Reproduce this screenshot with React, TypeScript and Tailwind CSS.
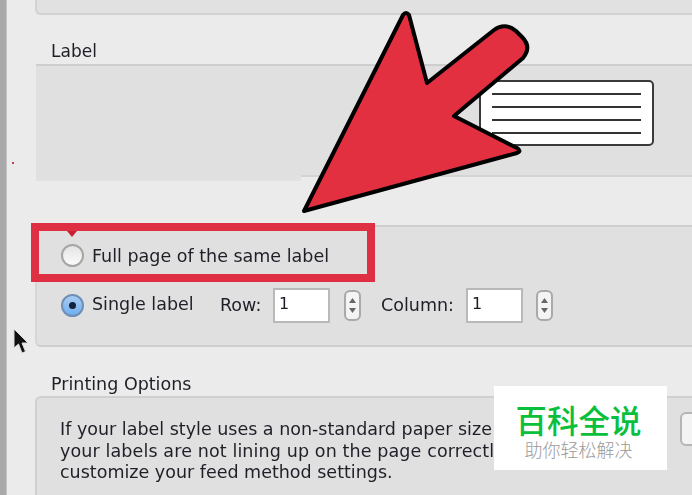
import React from "react";

const uiFont = "font-['DejaVu_Sans',sans-serif]";

function Stepper() {
  return (
    <div className="flex h-[31px] w-[17px] flex-col items-center justify-center gap-[5px] rounded-[6px] border-2 border-[#a9a9a9] bg-[#f4f4f4]">
      <svg width="7" height="5" viewBox="0 0 7 5"><path d="M3.5 0L7 5H0z" fill="#666" /></svg>
      <svg width="7" height="5" viewBox="0 0 7 5"><path d="M3.5 5L7 0H0z" fill="#666" /></svg>
    </div>
  );
}

function NumberField() {
  return (
    <div className="flex h-[35px] w-[57px] items-center border-2 border-[#b9b9b9] bg-white pb-1 pl-[4px] text-[16px] font-medium text-[#1c1c24] blur-[0.4px]">
      1
    </div>
  );
}

function Radio({ checked }: { checked?: boolean }) {
  if (checked) {
    return (
      <div className="flex size-[23px] items-center justify-center rounded-full border-2 border-[#6f8fb5] bg-gradient-to-b from-[#a9cdf3] to-[#6faef0]">
        <div className="size-[7px] rounded-full bg-[#14233a]" />
      </div>
    );
  }
  return <div className="size-[23px] rounded-full border-2 border-[#a5a5a5] bg-gradient-to-b from-[#e4e4e4] to-[#fbfbfb]" />;
}

export default function App() {
  return (
    <div className={`relative flex h-[495px] w-[692px] overflow-hidden bg-[#ebebeb] text-[#1f1f28] ${uiFont}`}>
      <div className="w-[7px] shrink-0 border-r border-[#c4c4c4] bg-[#a9a9a9]" />

      <div className="flex min-w-0 flex-1 flex-col pl-[28px]">
        <div className="-mr-3 h-[15px] shrink-0 rounded-bl-[6px] border-b-2 border-l-2 border-[#d2d2d2] bg-[#e1e1e1]" />

        <div className="mt-[26px] h-[21px] shrink-0 pl-[16px] text-[17px] leading-[21px] blur-[0.4px]">Label</div>

        <div className="relative mt-[2px] -mr-3 ml-px flex h-[113px] shrink-0 items-start border-t-2 border-b-2 border-t-[#cecece] border-b-[#d4d4d4] bg-[#e0e0e0] pt-[14px] pl-[443px]">
          <div className="flex h-[66px] w-[175px] flex-col justify-center gap-[11px] rounded-[5px] border-2 border-[#3a3a3a] bg-white px-[11px]">
            <div className="h-[2px] bg-[#333]" />
            <div className="h-[2px] bg-[#333]" />
            <div className="h-[2px] bg-[#333]" />
            <div className="h-[2px] bg-[#333]" />
          </div>
          <div className="absolute top-[109px] left-0 h-[6px] w-[265px] bg-[#e1e1e1]" />
        </div>

        <div className="mt-[48px] -mr-3 flex h-[122px] shrink-0 flex-col gap-[26px] rounded-bl-[6px] border-t-2 border-b-2 border-l-2 border-t-[#cfcfcf] border-b-[#cfcfcf] border-l-[#d6d6d6] bg-[#e0e0e0] pt-[17px] pl-[24px]">
          <div className="flex h-[23px] items-center gap-[8px]">
            <Radio />
            <span className="pt-[2px] text-[17.5px] whitespace-nowrap blur-[0.4px]">Full page of the same label</span>
          </div>
          <div className="-mt-[5px] flex h-[35px] items-center">
            <Radio checked />
            <span className="ml-[8px] w-[128px] pb-[3px] text-[17.5px] whitespace-nowrap blur-[0.4px]">Single label</span>
            <span className="w-[53px] text-[17.5px] blur-[0.4px]">Row:</span>
            <NumberField />
            <div className="ml-[14px]"><Stepper /></div>
            <span className="ml-[20px] w-[85px] text-[17.5px] blur-[0.4px]">Column:</span>
            <NumberField />
            <div className="ml-[13px]"><Stepper /></div>
          </div>
        </div>

        <div className="mt-[27px] h-[21px] shrink-0 pl-[16px] text-[17.5px] leading-[21px] whitespace-nowrap blur-[0.4px]">Printing Options</div>

        <div className="mt-[1px] -mr-[40px] flex min-h-0 flex-1 justify-between rounded-tl-[6px] border-t-2 border-l-2 border-[#cfcfcf] bg-[#e0e0e0] pt-[14px]">
          <div className="mt-[7px] ml-[23px] w-[434px] text-[17.5px] leading-[21.5px] whitespace-nowrap blur-[0.4px]">
            <div>If your label style uses a non-standard paper size</div>
            <div className="tracking-[0.12px]">your labels are not lining up on the page correctl</div>
            <div>customize your feed method settings.</div>
          </div>
          <div className="h-[34px] w-[52px] shrink-0 rounded-[6px] border-2 border-[#b5b5b5] bg-[#f3f3f3]" />
        </div>
      </div>

      {/* red highlight box */}
      <div className="absolute top-[223px] left-[31px] h-[59px] w-[344px] border-[8px] border-[#df3043]" />
      <div className="absolute top-[231px] left-[67px] size-0 border-x-[5px] border-t-[6px] border-x-transparent border-t-[#c9202f]" />
      <div className="absolute top-[162px] left-[12px] size-[2px] bg-[#c94050]" />

      {/* big arrow */}
      <svg className="absolute top-0 left-0" width="692" height="495" viewBox="0 0 692 495">
        <path
          d="M304 211L403 15Q406 11 409 15L427 83L494 30Q505 22 516 31L522 37Q532 47 523 58L454 116L517 148Q522 151 517 153L304 211Z"
          fill="#e23041"
          stroke="#000"
          strokeWidth="4"
          strokeLinejoin="round"
        />
      </svg>

      {/* mouse cursor */}
      <svg className="absolute top-[328px] left-[12px]" width="18" height="28" viewBox="0 0 18 28">
        <path d="M2 1V20L6.5 16L10 25L13.5 23.5L10 15H16Z" fill="#111" stroke="#ddd" strokeWidth="1" />
      </svg>

      {/* watermark */}
      <div className="absolute top-[386px] left-[494px] flex h-[84px] w-[173px] flex-col items-center bg-white pt-[15px] pr-[4px] font-['Noto_Sans_CJK_SC',sans-serif]">
        <div className="text-[31.5px] leading-[36px] font-medium text-[#0abf3b]">百科全说</div>
        <div className="text-[18px] leading-[24px] font-light text-[#9a9a9a]">助你轻松解决</div>
      </div>
    </div>
  );
}
